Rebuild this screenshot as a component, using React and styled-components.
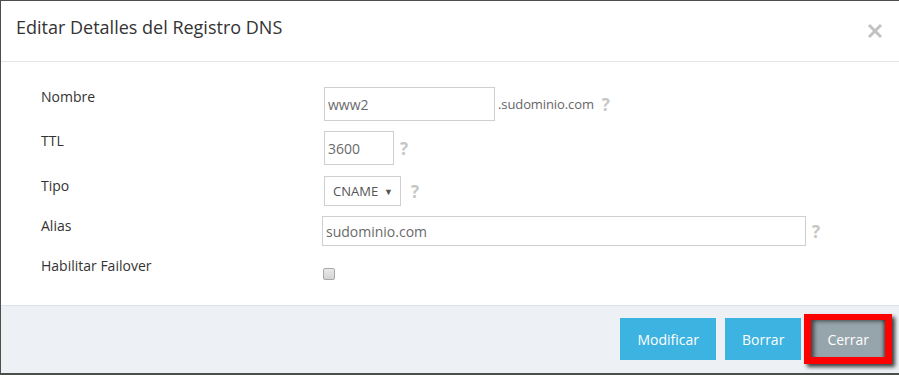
import React from "react";
import styled, { createGlobalStyle } from "styled-components";

const Global = createGlobalStyle`
  html, body { margin: 0; padding: 0; background: #4a4f4a; }
  body { font-family: "Open Sans", "Liberation Sans", sans-serif; overflow: hidden; }
  * { box-sizing: border-box; }
`;

const Modal = styled.div`
  margin: 1px 0 0 1px;
  width: 898px;
  height: 372px;
  background: #fff;
  display: flex;
  flex-direction: column;
`;

const Header = styled.div`
  height: 61px;
  padding: 14px 16px 0 15px;
  border-bottom: 1px solid #e5e5e5;
  display: flex;
  justify-content: space-between;
  align-items: flex-start;
`;

const Title = styled.h4`
  margin: 0;
  font-size: 18px;
  line-height: 25px;
  font-weight: 400;
  color: #333;
`;

const Close = styled.button`
  border: 0;
  background: none;
  padding: 0;
  margin-top: 8px;
  width: 16px;
  height: 16px;
  cursor: pointer;
  display: flex;
`;

const Body = styled.div`
  flex: 1;
  padding: 25px 0 0 40px;
  display: flex;
  flex-direction: column;
  gap: 10px;
`;

const Row = styled.div`
  display: flex;
  align-items: flex-start;
  margin-top: ${(p) => p.$mt || 0}px;
`;

const Label = styled.div`
  width: 283px;
  font-size: 14px;
  line-height: 20px;
  color: #333;
`;

const Field = styled.div`
  display: flex;
  align-items: center;
  margin-left: ${(p) => p.$shift || 0}px;
`;

const Input = styled.input`
  width: ${(p) => p.$w}px;
  height: ${(p) => p.$h}px;
  border: 1px solid #cfcfcf;
  padding: 0 3px;
  font-family: "Open Sans", "Liberation Sans", sans-serif;
  font-size: 14px;
  color: #6a6a6a;
  background: #fff;
  outline: none;
`;

const Suffix = styled.span`
  font-size: 13px;
  color: #666;
  margin-left: 3px;
  letter-spacing: -0.1px;
`;

const Help = styled.span`
  font-family: "Open Sans", "Liberation Sans", sans-serif;
  font-weight: 700;
  font-size: 17px;
  line-height: 1;
  color: #c6c6c6;
  margin-left: ${(p) => p.$ml || 7}px;
`;

const Select = styled.div`
  width: 77px;
  height: 30px;
  border: 1px solid #cfcfcf;
  padding: 0 0 0 8px;
  display: flex;
  align-items: center;
  justify-content: space-between;
  font-size: 13px;
  color: #555;
`;

const Arrow = styled.span`
  font-size: 9px;
  color: #555;
  margin-right: 7px;
`;

const Check = styled.span`
  display: block;
  width: 12px;
  height: 12px;
  margin: 12px 0 0 -1px;
  border: 1px solid #a9a9a9;
  border-radius: 2px;
  background: linear-gradient(#e9e9e9, #d4d4d4);
`;

const Footer = styled.div`
  height: 68px;
  border-top: 1px solid #dde3e9;
  background: #edf1f5;
  display: flex;
  justify-content: flex-end;
  align-items: flex-start;
  padding: 12px 14px 0 0;
  gap: 9px;
`;

const Button = styled.button`
  height: 42px;
  border: 0;
  padding: 0 ${(p) => p.$px || 17}px;
  font-family: "Open Sans", "Liberation Sans", sans-serif;
  font-size: 14px;
  color: #fff;
  background: ${(p) => (p.$gray ? "#96a5ab" : "#3cb3e0")};
  margin-left: ${(p) => p.$ml || 0}px;
  position: relative;
  box-shadow: ${(p) => (p.$gray ? "inset 3px 3px 4px rgba(0,0,0,0.6), inset -2px -1px 3px rgba(0,0,0,0.45)" : "none")};
`;

const Highlight = styled.span`
  position: absolute;
  top: -4px;
  bottom: -4px;
  left: -7px;
  right: -7px;
  border: 7px solid #ff0000;
  border-top-width: 6px;
  border-bottom-width: 7px;
  box-shadow: 3px 3px 4px rgba(0, 0, 0, 0.75);
  pointer-events: none;
`;

const HelpMark = (props) => <Help {...props}>?</Help>;

export default function App() {
  return (
    <>
      <Global />
      <Modal>
        <Header>
          <Title>Editar Detalles del Registro DNS</Title>
          <Close aria-label="Cerrar">
            <svg width="16" height="16" viewBox="0 0 16 16">
              <path d="M2 2 L14 14 M14 2 L2 14" stroke="#c2c2c2" strokeWidth="3" />
            </svg>
          </Close>
        </Header>
        <Body>
          <Row>
            <Label>Nombre</Label>
            <Field>
              <Input $w={171} $h={34} value="www2" readOnly />
              <Suffix>.sudominio.com</Suffix>
              <HelpMark $ml={8} />
            </Field>
          </Row>
          <Row>
            <Label>TTL</Label>
            <Field>
              <Input $w={70} $h={34} value="3600" readOnly />
              <HelpMark $ml={6} />
            </Field>
          </Row>
          <Row $mt={1}>
            <Label>Tipo</Label>
            <Field>
              <Select>
                CNAME<Arrow>▼</Arrow>
              </Select>
              <HelpMark $ml={10} />
            </Field>
          </Row>
          <Row>
            <Label>Alias</Label>
            <Field $shift={-2}>
              <Input $w={484} $h={30} value="sudominio.com" readOnly />
              <HelpMark $ml={6} />
            </Field>
          </Row>
          <Row>
            <Label>Habilitar Failover</Label>
            <Field>
              <Check />
            </Field>
          </Row>
        </Body>
        <Footer>
          <Button>Modificar</Button>
          <Button $px={17}>Borrar</Button>
          <Button $gray $px={16} $ml={1}>
            Cerrar
            <Highlight />
          </Button>
        </Footer>
      </Modal>
    </>
  );
}
